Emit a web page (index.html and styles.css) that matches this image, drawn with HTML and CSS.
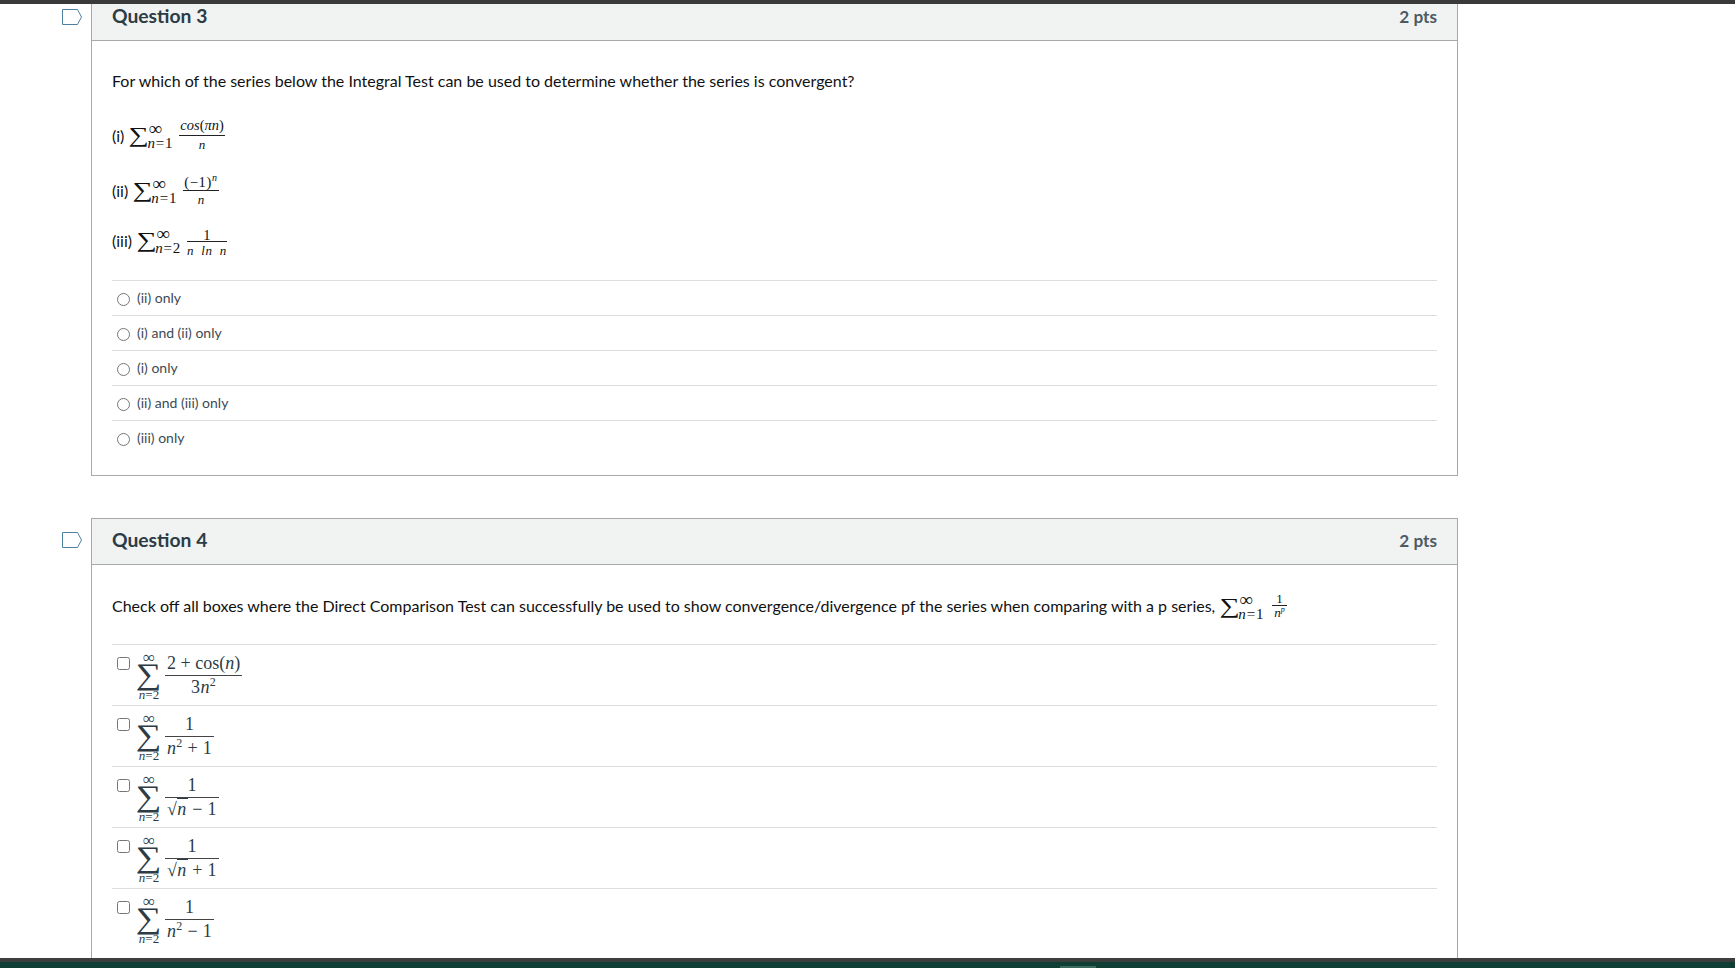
FILE: index.html
```html
<!DOCTYPE html>
<html lang="en">
<head>
<meta charset="utf-8">
<title>Quiz</title>
<link rel="stylesheet" href="styles.css">
</head>
<body>
<div class="topbar"></div>
<main class="quiz">
  <section class="question first">
    <svg class="flag" viewBox="0 0 20 16"><path d="M.5.5H15.5L19.5 8 15.5 15.5H.5Z"/></svg>
    <div class="card">
      <header class="head"><h2>Question 3</h2><span class="pts">2 pts</span></header>
      <div class="body">
        <p class="prompt">For which of the series below the Integral Test can be used to determine whether the series is convergent?</p>
        <p class="stmt s1">(i) <span class="isum"><span class="sig">∑</span><span class="lims"><span class="up">∞</span><span class="lo"><i>n</i>=1</span></span></span><span class="ifrac"><span class="num"><i>cos</i>(<i>πn</i>)</span><span class="den"><i>n</i></span></span></p>
        <p class="stmt s2">(ii) <span class="isum"><span class="sig">∑</span><span class="lims"><span class="up">∞</span><span class="lo"><i>n</i>=1</span></span></span><span class="ifrac"><span class="num">(−1)<sup><i>n</i></sup></span><span class="den"><i>n</i></span></span></p>
        <p class="stmt s3">(iii) <span class="isum"><span class="sig">∑</span><span class="lims"><span class="up">∞</span><span class="lo"><i>n</i>=2</span></span></span><span class="ifrac"><span class="num">1</span><span class="den wide"><i>n ln n</i></span></span></p>
        <div class="answers">
          <label class="opt"><input type="radio" name="q3"><span>(ii) only</span></label>
          <label class="opt"><input type="radio" name="q3"><span>(i) and (ii) only</span></label>
          <label class="opt"><input type="radio" name="q3"><span>(i) only</span></label>
          <label class="opt"><input type="radio" name="q3"><span>(ii) and (iii) only</span></label>
          <label class="opt"><input type="radio" name="q3"><span>(iii) only</span></label>
        </div>
      </div>
    </div>
  </section>
  <section class="question second">
    <svg class="flag" viewBox="0 0 20 16"><path d="M.5.5H15.5L19.5 8 15.5 15.5H.5Z"/></svg>
    <div class="card">
      <header class="head"><h2>Question 4</h2><span class="pts">2 pts</span></header>
      <div class="body">
        <p class="prompt q4">Check off all boxes where the Direct Comparison Test can successfully be used to show convergence/divergence pf the series when comparing with a p series, <span class="isum"><span class="sig">∑</span><span class="lims"><span class="up">∞</span><span class="lo"><i>n</i>=1</span></span></span><span class="ifrac small"><span class="num">1</span><span class="den"><i>n<sup>p</sup></i></span></span></p>
        <div class="checks">
          <label class="chk"><input type="checkbox"><span class="dsum"><span class="d-up">∞</span><span class="d-sig">∑</span><span class="d-lo"><i>n</i>=2</span></span><span class="dfrac"><span class="num">2 + cos(<i>n</i>)</span><span class="den">3<i>n</i><sup>2</sup></span></span></label>
          <label class="chk"><input type="checkbox"><span class="dsum"><span class="d-up">∞</span><span class="d-sig">∑</span><span class="d-lo"><i>n</i>=2</span></span><span class="dfrac"><span class="num">1</span><span class="den"><i>n</i><sup>2</sup> + 1</span></span></label>
          <label class="chk"><input type="checkbox"><span class="dsum"><span class="d-up">∞</span><span class="d-sig">∑</span><span class="d-lo"><i>n</i>=2</span></span><span class="dfrac"><span class="num">1</span><span class="den"><span class="rt">√<i>n</i></span> − 1</span></span></label>
          <label class="chk"><input type="checkbox"><span class="dsum"><span class="d-up">∞</span><span class="d-sig">∑</span><span class="d-lo"><i>n</i>=2</span></span><span class="dfrac"><span class="num">1</span><span class="den"><span class="rt">√<i>n</i></span> + 1</span></span></label>
          <label class="chk"><input type="checkbox"><span class="dsum"><span class="d-up">∞</span><span class="d-sig">∑</span><span class="d-lo"><i>n</i>=2</span></span><span class="dfrac"><span class="num">1</span><span class="den"><i>n</i><sup>2</sup> − 1</span></span></label>
        </div>
      </div>
    </div>
  </section>
</main>
<div class="bottombar"><div class="dock"></div></div>
</body>
</html>
```
FILE: styles.css
```css
* { box-sizing: border-box; }
html, body { margin: 0; height: 100%; }
body {
  display: flex;
  flex-direction: column;
  height: 968px;
  overflow: hidden;
  background: #fff;
  color: #2d3b45;
  font-family: Lato, "Liberation Sans", sans-serif;
}
.topbar { height: 4px; flex: none; background: #3a3a3a; position: relative; z-index: 2; }
.quiz { flex: 1; min-height: 0; overflow: hidden; padding-left: 91px; width: 1458px; }
.question { position: relative; }
.question.first { margin-top: -10px; }
.question.second { margin-top: 42px; }
.flag { position: absolute; left: -29px; top: 15px; width: 20px; height: 16px; fill: #fff; stroke: #4f7f9f; stroke-width: 1; }
.second .flag { top: 14px; }
.card { border: 1px solid #a8a8a8; }
.head {
  display: flex; justify-content: space-between; align-items: center;
  height: 46px; padding: 0 20px 0 20px;
  background: #f1f3f3; border-bottom: 1px solid #a8a8a8;
}
.head h2 { margin: 0 0 4px; font-size: 19.3px; font-weight: 700; color: #2d3b45; }
.pts { font-size: 17.2px; font-weight: 700; color: #4d5a63; margin-bottom: 2px; }
.body { padding: 0 20px; }
.prompt { margin: 0; font-size: 16px; line-height: 24px; padding-top: 28px; color: #111; }
.stmt { margin: 0; font-size: 16px; display: flex; align-items: center; color: #111; white-space: pre; }
.s1 { margin-top: 18px; height: 48px; }
.s2 { margin-top: 7px; height: 48px; }
.s3 { margin-top: 2px; height: 48px; }
.isum { display: inline-flex; align-items: center; font-family: "Liberation Serif", serif; }
.sig { font-size: 21px; line-height: 20px; margin: 0 2px 0 3px; transform: scaleX(1.35); }
.lims { display: inline-flex; flex-direction: column; font-size: 15px; line-height: 15px; letter-spacing: .8px; margin: 4px 0 0 -1px; }
.up { font-size: 19px; letter-spacing: 0; line-height: 12px; margin-left: 1px; }
.lo { margin-top: 1px; }
.ifrac { display: inline-flex; flex-direction: column; align-items: center; margin-left: 6px; font-family: "Liberation Serif", serif; font-size: 14.5px; line-height: 15px; }
.ifrac .num { padding: 0 1px 2px; border-bottom: 1px solid #222; align-self: stretch; text-align: center; }
.ifrac .den { font-size: 13px; padding-top: 1px; }
.ifrac .wide { word-spacing: 3.5px; letter-spacing: .5px; }
.ifrac sup { font-size: 10px; line-height: 0; }
.s2 .ifrac .num { letter-spacing: .7px; padding: 2px 1px 0; }
.s3 .ifrac { margin-top: 7px; }
.s3 .ifrac .num { line-height: 12px; padding-bottom: 0; }
.ifrac.small { font-size: 13px; margin-left: 8px; }
.ifrac.small .num { line-height: 12px; padding: 0 3px; }
.ifrac.small .den { line-height: 12px; padding: 1px 2px 0; }
.ifrac.small .den sup { font-size: 8px; }
.answers { margin-top: 15.5px; padding-bottom: 19.5px; }
.opt {
  display: flex; align-items: center; gap: 7px; height: 35.13px;
  padding-left: 5px; border-top: 1px solid #ddd;
  font-size: 14px; color: #3d4a53;
}
.opt input { margin: 3px 0 0; width: 13px; height: 13px; }
.opt span { margin-bottom: 1px; }
.prompt.q4 { padding-top: 4px; display: flex; align-items: center; white-space: pre; height: 79px; }
.checks { padding-bottom: 20px; }
.chk {
  display: flex; align-items: center; height: 61px; padding-left: 5px; border-top: 1px solid #ddd;
  font-family: "Liberation Serif", serif; font-size: 18px;
}
.chk input { margin: -22px 7px 0 0; width: 13px; height: 13px; }
.dsum { display: inline-flex; flex-direction: column; align-items: center; width: 24px; line-height: 1; }
.d-up { font-size: 17px; line-height: 11px; margin-top: 2px; }
.d-sig { font-size: 30px; line-height: 28px; margin-top: -3px; transform: scaleX(1.2); }
.d-lo { font-size: 13px; line-height: 11px; margin-top: 1px; white-space: nowrap; }
.dfrac { display: inline-flex; flex-direction: column; align-items: center; margin-left: 4px; line-height: 22px; white-space: pre; }
.dfrac .num { padding: 0 2px 1px; border-bottom: 1px solid #444; align-self: stretch; text-align: center; }
.dfrac .den { padding: 0 2px; letter-spacing: .3px; }
.dfrac sup { font-size: 12px; line-height: 0; }
.rt { white-space: nowrap; }
.rt i { border-top: 1px solid #2d3b45; padding-right: 1px; }
.bottombar { height: 10px; flex: none; background: #0f3e35; border-top: 4px solid #3d3d3d; position: relative; }
.dock { position: absolute; left: 1060px; top: 4px; width: 36px; height: 2px; background: #3a6a5e; }
```
